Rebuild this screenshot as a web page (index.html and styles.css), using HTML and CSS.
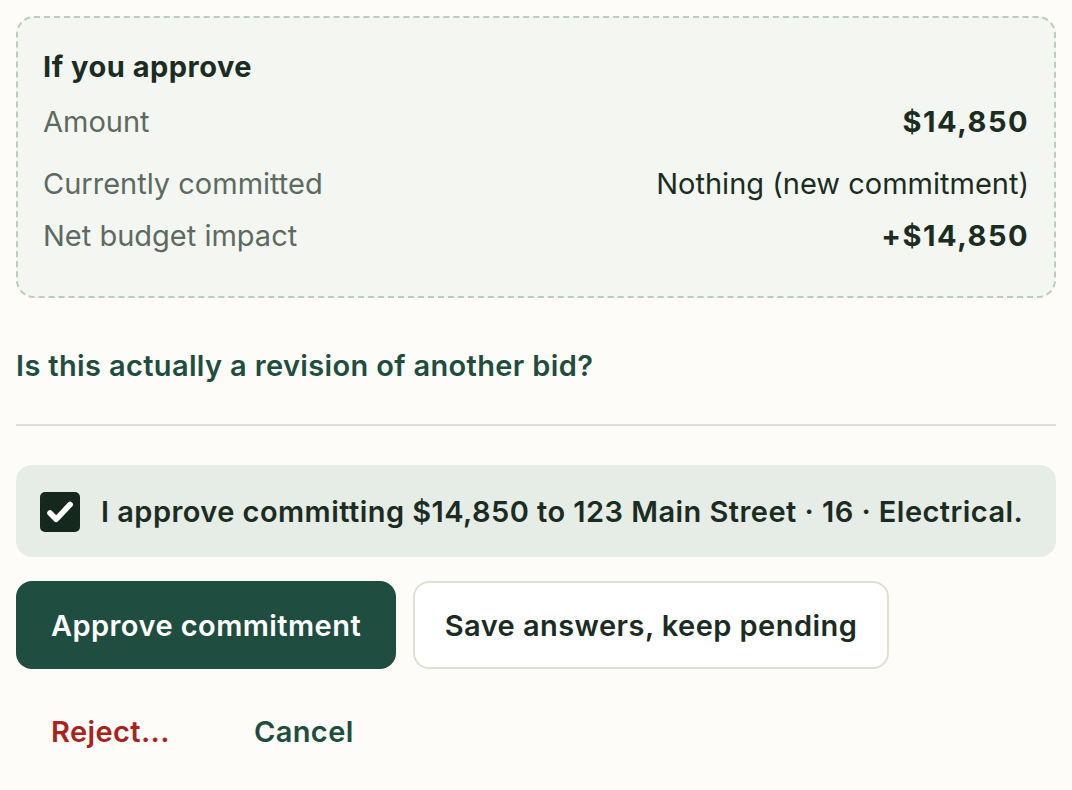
FILE: index.html
```html
<!DOCTYPE html>
<html>
<head>
<meta charset="utf-8">
<link rel="stylesheet" href="styles.css">
</head>
<body>
<div class="page">
  <section class="impact">
    <h2 class="impact-title">If you approve</h2>
    <div class="row row-amount"><span class="label">Amount</span><span class="value strong">$14,850</span></div>
    <div class="row row-current"><span class="label">Currently committed</span><span class="value">Nothing (new commitment)</span></div>
    <div class="row row-net"><span class="label">Net budget impact</span><span class="value strong">+$14,850</span></div>
  </section>

  <a class="revision-link">Is this actually a revision of another bid?</a>

  <hr class="divider">

  <label class="confirm">
    <span class="checkbox">
      <svg viewBox="0 0 24 24" width="32" height="32"><path d="M4.5 12.8l4.6 4.7L19.6 6.4" fill="none" stroke="#fff" stroke-width="4.2" stroke-linecap="round" stroke-linejoin="round"/></svg>
    </span>
    <span class="confirm-text">I approve committing $14,850 to 123 Main Street · 16 · Electrical.</span>
  </label>

  <div class="actions">
    <button class="btn btn-primary">Approve commitment</button>
    <button class="btn btn-secondary">Save answers, keep pending</button>
  </div>

  <div class="links">
    <a class="link link-reject">Reject...</a>
    <a class="link link-cancel">Cancel</a>
  </div>
</div>
</body>
</html>
```

FILE: styles.css
```css
html, body {
  margin: 0;
  padding: 0;
  background: #fdfcf8;
}
body {
  font-family: Inter, "Noto Sans", "Liberation Sans", sans-serif;
  color: #1b2c23;
  -webkit-font-smoothing: antialiased;
}
.page {
  padding: 16px;
  width: 1040px;
}
.impact {
  background: #f4f7f1;
  border: 2px dashed #bccdbb;
  border-radius: 18px;
  padding: 29px 25px 40px 25px;
  height: 282px;
  box-sizing: border-box;
}
.impact-title {
  margin: 0;
  font-size: 29px;
  font-weight: 700;
  letter-spacing: 0.5px;
  line-height: 40px;
  color: #1b2c23;
}
.row {
  display: flex;
  justify-content: space-between;
  align-items: center;
  font-size: 29px;
  line-height: 40px;
}
.row-amount { margin-top: 15px; }
.row-current { margin-top: 22px; }
.row-net { margin-top: 12px; }
.label { color: #5d6a61; }
.value { color: #1b2c23; }
.value.strong { font-weight: 700; letter-spacing: 1.5px; }

.revision-link {
  display: block;
  margin-top: 48px;
  font-size: 29px;
  font-weight: 600;
  letter-spacing: 0.35px;
  line-height: 40px;
  color: #1f4d3f;
}
.divider {
  border: 0;
  border-top: 2px solid #e2ded4;
  margin: 38px 0 0 0;
}
.confirm {
  display: flex;
  align-items: center;
  gap: 21px;
  margin-top: 39px;
  background: #e6ede6;
  border-radius: 16px;
  height: 92px;
  padding: 2px 24px 0 24px;
  box-sizing: border-box;
}
.checkbox {
  width: 40px;
  height: 40px;
  border-radius: 5px;
  background: #14281e;
  display: flex;
  align-items: center;
  justify-content: center;
  flex: none;
}
.confirm-text {
  font-size: 29px;
  font-weight: 600;
  letter-spacing: 0.45px;
  line-height: 40px;
  color: #1b2c23;
}
.actions {
  display: flex;
  gap: 17px;
  margin-top: 24px;
}
.btn {
  font-family: inherit;
  font-size: 29px;
  font-weight: 600;
  letter-spacing: 0.45px;
  height: 88px;
  border-radius: 16px;
  padding: 0;
  box-sizing: border-box;
  cursor: pointer;
}
.btn-primary {
  background: #1f4d40;
  color: #ffffff;
  border: 0;
  width: 380px;
}
.btn-secondary {
  background: #ffffff;
  color: #1b2c23;
  border: 2px solid #e2ded4;
  width: 476px;
}
.links {
  display: flex;
  gap: 84px;
  margin-top: 43px;
  padding-left: 35px;
}
.link {
  font-size: 29px;
  font-weight: 600;
  letter-spacing: 0.4px;
  line-height: 40px;
}
.link-reject { color: #a8231c; }
.link-cancel { color: #1f4d3f; }
```
